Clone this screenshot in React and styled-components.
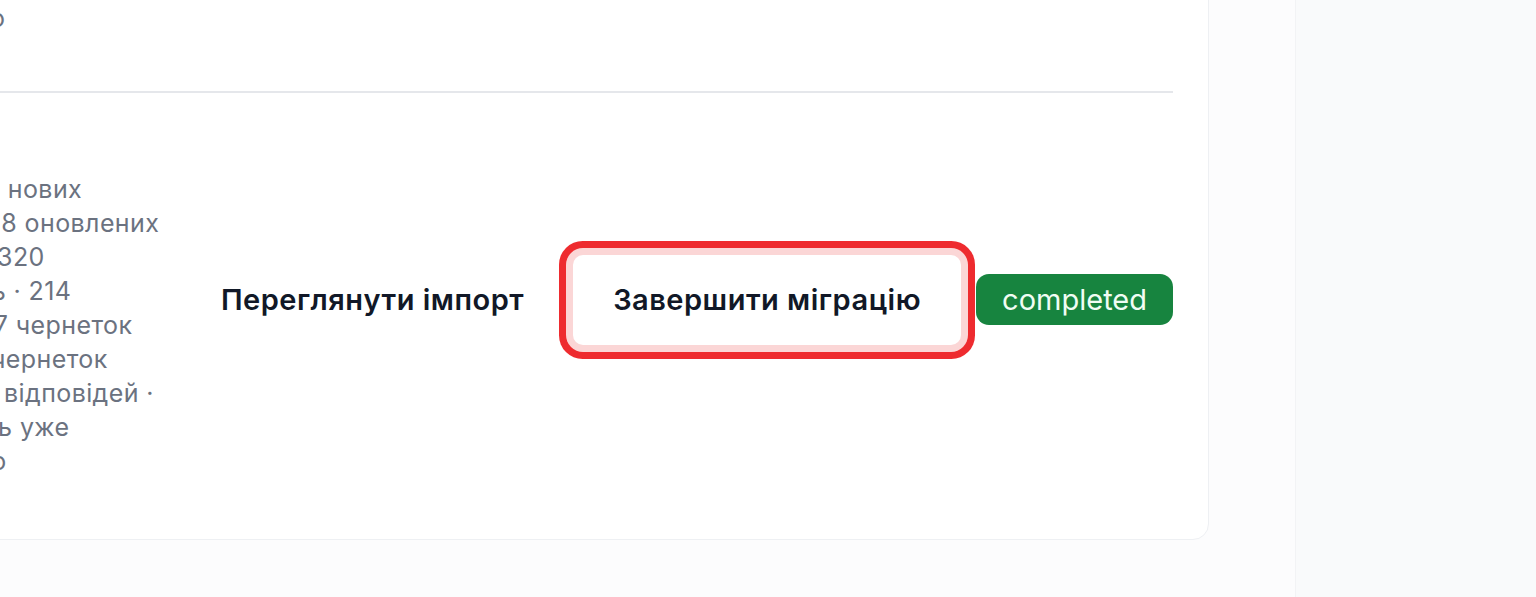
import React from 'react';
import styled, { createGlobalStyle } from 'styled-components';

const migrations = [
  {
    id: 'wiki',
    title: 'Вікі',
    meta: '2 год тому',
    lines: [
      'Перенесено 1 842 учасників',
      '· 36 груп · 12 розділів форуму, з них 4 приватні · профілі',
      'опрацьовано',
    ],
  },
  {
    id: 'forum',
    title: 'Форум',
    lines: [
      'Додано: 980 нових',
      'тем додано, 8 оновлених',
      'пропущено: 320',
      'не змінилось · 214',
      'збережено: 7 чернеток',
      'видалено 5 чернеток',
      'вкладень · 8 відповідей ·',
      'адже профіль уже',
      'заархівовано',
    ],
    actions: true,
    status: 'completed',
  },
];

const GlobalStyle = createGlobalStyle`
  html, body {
    margin: 0;
    height: 100%;
  }
  body {
    background: #fcfcfd;
    font-family: Inter, "Noto Sans", "Liberation Sans", sans-serif;
    overflow: hidden;
    -webkit-font-smoothing: antialiased;
  }
  #root {
    height: 100%;
  }
  * {
    box-sizing: border-box;
  }
`;

const Shell = styled.div`
  display: flex;
  height: 100vh;
  overflow: hidden;
`;

const Main = styled.main`
  flex: 1;
  min-width: 0;
  padding-right: 86px;
`;

const Aside = styled.aside`
  width: 241px;
  flex-shrink: 0;
  background: #f9fafb;
  border-left: 1px solid #f2f3f5;
`;

const Card = styled.section`
  margin: -155px 0 0 -197px;
  background: #fff;
  border: 1px solid #eef0f3;
  border-radius: 16px;
  padding: 8px 35px 33px 36px;
`;

const Row = styled.div`
  display: flex;
  align-items: center;
  gap: 24px;
  padding: 28px 0;

  & + & {
    border-top: 2px solid #e5e7eb;
  }
`;

const Info = styled.div`
  flex: 1;
  min-width: 0;
`;

const Title = styled.h3`
  margin: 0 0 17px;
  font-size: 24px;
  line-height: 34px;
  font-weight: 600;
  color: #111827;
`;

const Description = styled.p`
  margin: 0;
  font-size: 25px;
  line-height: 34px;
  letter-spacing: 0.4px;
  color: #6b7280;
  white-space: pre;
`;

const Meta = styled.div`
  margin-top: 6px;
  font-size: 18px;
  line-height: 22px;
  color: #9ca3af;
`;

const Actions = styled.div`
  display: flex;
  align-items: center;
  gap: 15px;
  flex-shrink: 0;
`;

const GhostButton = styled.button`
  border: 0;
  background: transparent;
  padding: 28px 34px;
  font: inherit;
  font-size: 29px;
  line-height: 34px;
  font-weight: 600;
  letter-spacing: 0.5px;
  color: #111827;
  cursor: pointer;
`;

const PrimaryButton = styled.button`
  border: 0;
  background: #fff;
  border-radius: 10px;
  padding: 28px 40px;
  font: inherit;
  font-size: 29px;
  line-height: 34px;
  font-weight: 600;
  letter-spacing: 0.5px;
  color: #111827;
  box-shadow: 0 0 0 7px #fbd6d6, 0 0 0 14px #ee2b2f;
  cursor: pointer;
`;

const Badge = styled.span`
  display: inline-flex;
  align-items: center;
  padding: 8px 26px;
  border-radius: 13px;
  background: ${(p) => (p.$status === 'completed' ? '#17843f' : '#6b7280')};
  color: #f0fdf4;
  font-size: 29px;
  line-height: 35px;
`;

const MigrationRow = ({ item }) => (
  <Row>
    <Info>
      <Title>{item.title}</Title>
      <Description>{item.lines.join('\n')}</Description>
      {item.meta && <Meta>{item.meta}</Meta>}
    </Info>
    {item.actions && (
      <Actions>
        <GhostButton>Переглянути імпорт</GhostButton>
        <PrimaryButton>Завершити міграцію</PrimaryButton>
        <Badge $status={item.status}>{item.status}</Badge>
      </Actions>
    )}
  </Row>
);

export default function App() {
  return (
    <>
      <GlobalStyle />
      <Shell>
        <Main>
          <Card>
            {migrations.map((m) => (
              <MigrationRow key={m.id} item={m} />
            ))}
          </Card>
        </Main>
        <Aside />
      </Shell>
    </>
  );
}
